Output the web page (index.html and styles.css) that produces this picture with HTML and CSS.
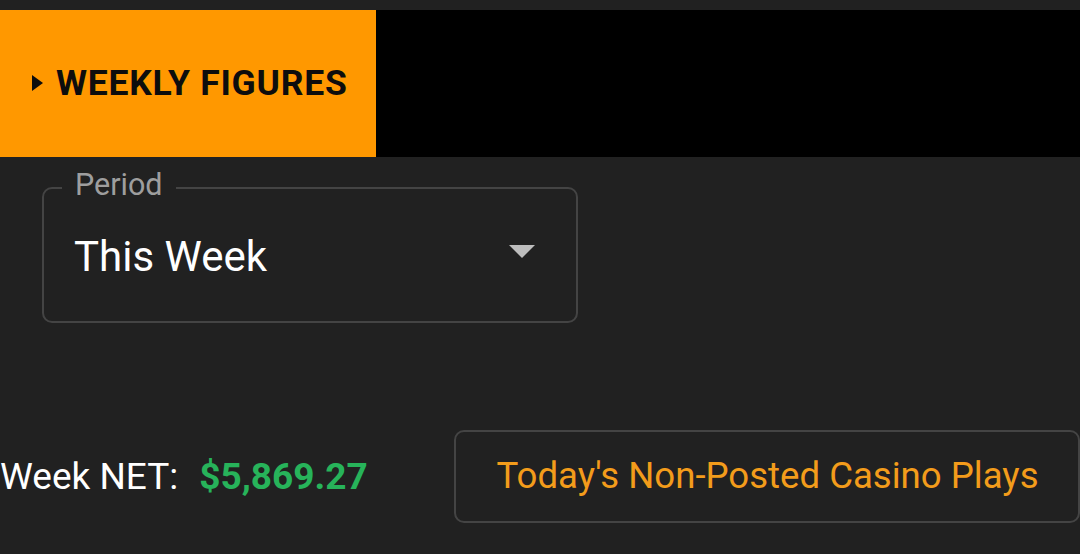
FILE: index.html
```html
<!DOCTYPE html>
<html lang="en">
<head>
<meta charset="utf-8">
<title>Weekly Figures</title>
<link rel="stylesheet" href="styles.css">
</head>
<body>
<div class="topstrip"></div>
<div class="header">
  <div class="tab">
    <span class="caret"></span>
    <span class="tab-title">WEEKLY FIGURES</span>
  </div>
</div>
<div class="content">
  <div class="field">
    <span class="field-label">Period</span>
    <span class="field-value">This Week</span>
    <span class="dropdown-arrow"></span>
  </div>
  <div class="summary">
    <div class="net">
      <span class="net-label">Week NET:</span>
      <span class="net-value">$5,869.27</span>
    </div>
    <button class="casino-btn">Today's Non-Posted Casino Plays</button>
  </div>
</div>
</body>
</html>
```
FILE: styles.css
```css
* { box-sizing: border-box; }
html, body {
  margin: 0;
  padding: 0;
  background: #212121;
  font-family: Roboto, "Liberation Sans", sans-serif;
  overflow: hidden;
}
.topstrip {
  height: 10px;
  background: #212121;
}
.header {
  display: flex;
  height: 147px;
  background: #000;
}
.tab {
  width: 376px;
  background: #ff9800;
  display: flex;
  align-items: center;
  padding-left: 32px;
  gap: 13px;
}
.caret {
  width: 0;
  height: 0;
  border-top: 8.5px solid transparent;
  border-bottom: 8.5px solid transparent;
  border-left: 11px solid #0d0d0d;
  margin-top: -2px;
}
.tab-title {
  font-size: 35.5px;
  font-weight: 700;
  color: #0d0d0d;
  letter-spacing: 0.75px;
  margin-top: -2px;
}
.content {
  padding-top: 30px;
}
.field {
  position: relative;
  margin-left: 42px;
  width: 536px;
  height: 136px;
  border: 2px solid #444;
  border-radius: 10px;
  display: flex;
  align-items: center;
  justify-content: space-between;
  padding: 0 41px 0 30px;
}
.field-label {
  position: absolute;
  top: -22px;
  left: 18px;
  padding: 0 13px;
  background: #212121;
  color: #9e9e9e;
  font-size: 30.5px;
  line-height: 36px;
}
.field-value {
  color: #fff;
  font-size: 42px;
  padding-top: 2px;
}
.dropdown-arrow {
  width: 0;
  height: 0;
  border-left: 13px solid transparent;
  border-right: 13px solid transparent;
  border-top: 13px solid #bdbdbd;
  margin-bottom: 8px;
}
.summary {
  display: flex;
  align-items: center;
  margin-top: 107px;
}
.net {
  display: flex;
  align-items: center;
  width: 454px;
  gap: 21px;
  font-size: 37px;
}
.net-label {
  color: #fff;
}
.net-value {
  color: #27b35a;
  font-weight: 700;
}
.casino-btn {
  width: 627px;
  height: 93px;
  background: #212121;
  border: 2px solid #444;
  border-radius: 10px;
  color: #f39c1b;
  font-family: Roboto, "Liberation Sans", sans-serif;
  font-size: 36.6px;
  text-align: left;
  padding: 0 0 2px 41px;
}
```
